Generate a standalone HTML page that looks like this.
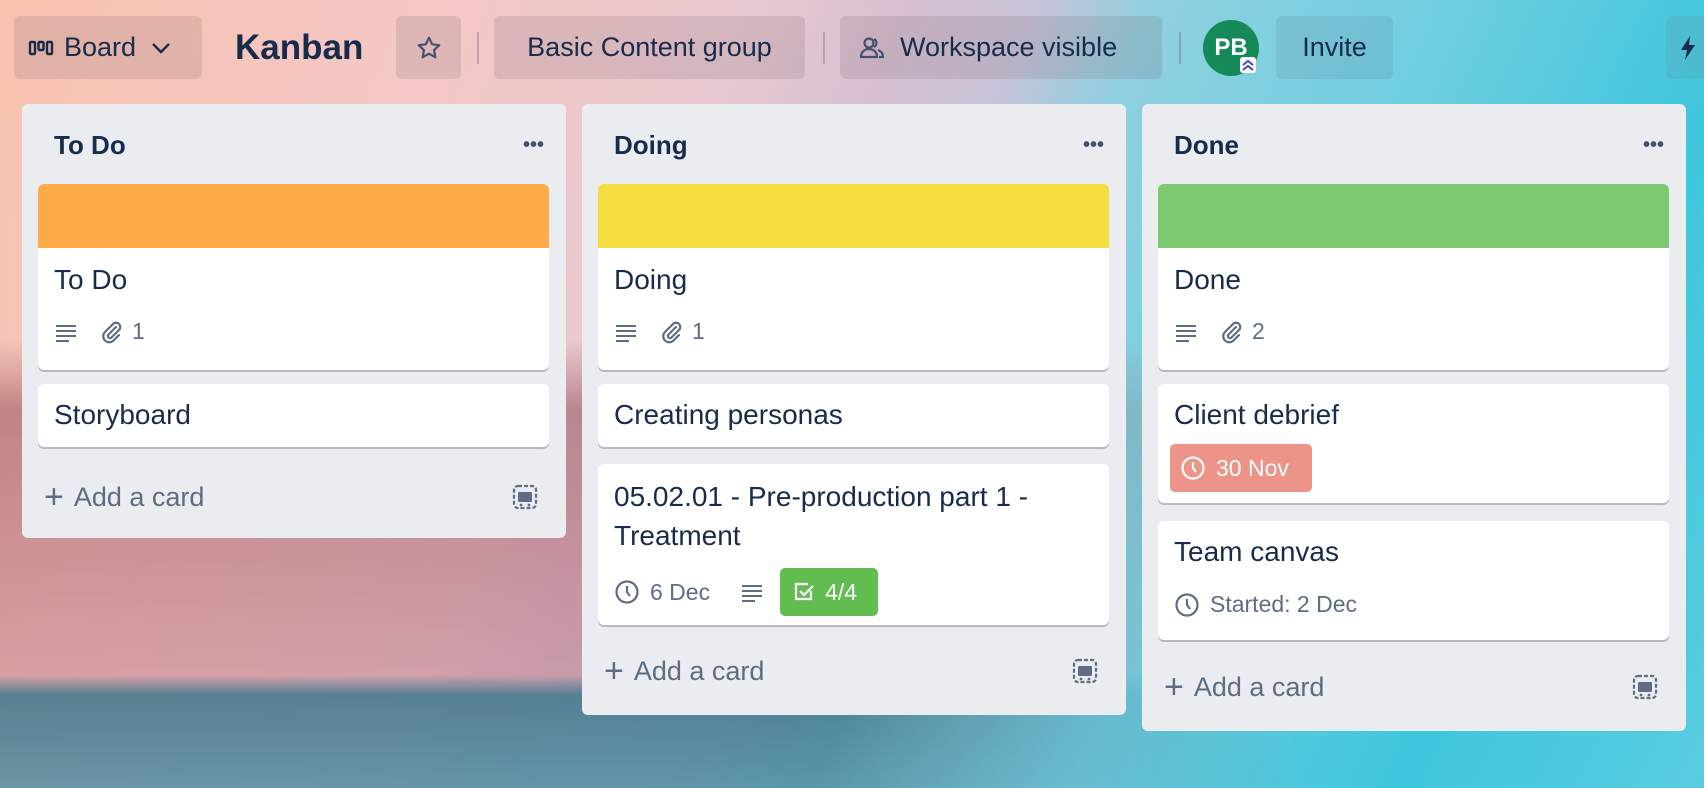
<!DOCTYPE html>
<html><head><meta charset="utf-8"><style>
*{box-sizing:border-box;margin:0;padding:0}
body{width:1704px;height:788px;overflow:hidden;position:relative;font-family:"Liberation Sans",sans-serif;color:#172b4d;
background:linear-gradient(115deg,#f9c2ae 0%,#f4c8c6 22%,#e9c9cf 36%,#d6c0d0 44%,#c9c3d8 50%,#8fd0e0 56%,#6fcfe0 70%,#3ec6dc 85%,#5acde0 100%);}
.bg{position:absolute;left:0;top:0;width:1704px;height:788px;
background:linear-gradient(180deg,rgba(0,0,0,0) 0,rgba(0,0,0,0) 340px,rgba(150,80,90,.55) 410px,rgba(180,110,125,.45) 675px,rgba(70,120,140,.9) 695px,rgba(80,140,160,.85) 788px);
-webkit-mask-image:linear-gradient(100deg,#000 0%,#000 52%,rgba(0,0,0,.3) 66%,transparent 78%);mask-image:linear-gradient(100deg,#000 0%,#000 52%,rgba(0,0,0,.3) 66%,transparent 78%)}
.a{position:absolute}
.btn{position:absolute;top:16px;height:63px;border-radius:6px;background:rgba(120,100,110,.18);display:flex;align-items:center;font-size:27px;color:#172b4d}
.sep{position:absolute;top:32px;width:2px;height:32px;background:rgba(80,80,100,.3)}
.list{position:absolute;top:104px;width:544px;background:#ebecf0;border-radius:6px}
.lt{position:absolute;left:32px;top:26px;font-size:26px;font-weight:bold}
.dots{position:absolute;right:22px;top:30px;font-size:20px;color:#42526e;font-weight:bold}
.card{position:absolute;left:16px;width:511px;background:#fff;border-radius:6px;box-shadow:0 2px 0 #b4b9c4}
.ct{position:absolute;left:16px;font-size:28px;color:#172b4d}
.meta{position:absolute;left:16px;display:flex;align-items:center;font-size:23px;color:#5e6c84}
.add{position:absolute;left:22px;font-size:27px;color:#5e6c84;display:flex;align-items:center}
</style></head><body>
<div class="bg"></div>
<div class="btn" style="left:14px;width:188px;padding-left:14px">
<svg width="26" height="18" viewBox="0 0 26 18"><g fill="none" stroke="#172b4d" stroke-width="2.4"><rect x="2" y="3" width="5" height="12" rx="1"/><rect x="10.5" y="3" width="5" height="8" rx="1"/><rect x="19" y="3" width="5" height="12" rx="1"/></g></svg>
<span style="margin-left:10px">Board</span>
<svg style="margin-left:14px" width="22" height="14" viewBox="0 0 22 14"><path d="M3 3l8 8 8-8" fill="none" stroke="#172b4d" stroke-width="2.4"/></svg></div>
<div class="a" style="left:235px;top:28px;font-size:35px;font-weight:bold">Kanban</div>
<div class="btn" style="left:396px;width:65px;justify-content:center"><svg width="26" height="26" viewBox="0 0 24 24"><path d="M12 2.5l2.9 6.1 6.6.8-4.9 4.6 1.3 6.6L12 17.3l-5.9 3.3 1.3-6.6-4.9-4.6 6.6-.8z" fill="none" stroke="#42526e" stroke-width="2" stroke-linejoin="round"/></svg></div>
<div class="sep" style="left:477px"></div>
<div class="btn" style="left:494px;width:311px;justify-content:center">Basic Content group</div>
<div class="sep" style="left:823px"></div>
<div class="btn" style="left:840px;width:322px;padding-left:18px">
<svg width="28" height="26" viewBox="0 0 28 26"><g fill="none" stroke="#42526e" stroke-width="2.2"><circle cx="11" cy="8" r="4.5"/><path d="M3 22c0-5 3.5-8 8-8s8 3 8 8z"/><path d="M16 4a4.5 4.5 0 010 8M20 15c3 1 5 3.5 5 7h-4"/></g></svg>
<span style="margin-left:14px">Workspace visible</span></div>
<div class="sep" style="left:1179px"></div>
<div class="a" style="left:1203px;top:20px;width:56px;height:56px;border-radius:50%;background:#158a58;color:#fff;font-weight:bold;font-size:24px;display:flex;align-items:center;justify-content:center">PB</div>
<div class="a" style="left:1240px;top:57px;width:16px;height:16px;background:#fff;border-radius:3px"><svg width="16" height="16" viewBox="0 0 16 16"><path d="M3 8l5-4 5 4M3 13l5-4 5 4" fill="none" stroke="#3d45c0" stroke-width="2"/></svg></div>
<div class="btn" style="left:1276px;width:117px;justify-content:center;background:rgba(100,150,170,.25)">Invite</div>
<div class="btn" style="left:1666px;width:60px;padding-left:12px;background:rgba(100,150,170,.25)"><svg width="20" height="28" viewBox="0 0 20 28"><path d="M12 2L3 16h6l-2 10 10-15h-6z" fill="#172b4d"/></svg></div>

<!-- List 1 -->
<div class="list" style="left:22px;height:434px">
<div class="lt">To Do</div><div class="dots">•••</div>
<div class="card" style="top:80px;height:186px;overflow:visible">
<div style="height:64px;background:#ffab4a;border-radius:6px 6px 0 0"></div>
<div class="ct" style="top:80px">To Do</div>
<div class="meta" style="top:134px"><svg width="24" height="20" viewBox="0 0 24 20"><path d="M2 4h20M2 9h20M2 14h20M2 19h13" stroke="#5e6c84" stroke-width="2"/></svg>
<svg style="margin-left:22px" width="24" height="24" viewBox="0 0 24 24"><path d="M16 7l-7.5 7.5a2 2 0 003 3L19 10a4 4 0 00-6-6l-8 8a6 6 0 008.5 8.5L19 15" fill="none" stroke="#5e6c84" stroke-width="2.2" stroke-linecap="round"/></svg><span style="margin-left:8px">1</span></div>
</div>
<div class="card" style="top:280px;height:63px"><div class="ct" style="top:15px">Storyboard</div></div>
<div class="add" style="top:374px"><span style="font-size:34px;margin-right:10px;font-weight:300">+</span>Add a card</div>
<svg class="a" style="right:28px;top:380px" width="26" height="26" viewBox="0 0 26 26"><rect x="2" y="2" width="22" height="22" rx="4" fill="none" stroke="#5e6c84" stroke-width="2.2" stroke-dasharray="4 2"/><rect x="6" y="8" width="14" height="10" rx="1" fill="#5e6c84"/><circle cx="9" cy="21" r="1.4" fill="#5e6c84"/><circle cx="17" cy="21" r="1.4" fill="#5e6c84"/></svg>
</div>

<!-- List 2 -->
<div class="list" style="left:582px;height:611px">
<div class="lt">Doing</div><div class="dots">•••</div>
<div class="card" style="top:80px;height:186px">
<div style="height:64px;background:#f5dc3f;border-radius:6px 6px 0 0"></div>
<div class="ct" style="top:80px">Doing</div>
<div class="meta" style="top:134px"><svg width="24" height="20" viewBox="0 0 24 20"><path d="M2 4h20M2 9h20M2 14h20M2 19h13" stroke="#5e6c84" stroke-width="2"/></svg>
<svg style="margin-left:22px" width="24" height="24" viewBox="0 0 24 24"><path d="M16 7l-7.5 7.5a2 2 0 003 3L19 10a4 4 0 00-6-6l-8 8a6 6 0 008.5 8.5L19 15" fill="none" stroke="#5e6c84" stroke-width="2.2" stroke-linecap="round"/></svg><span style="margin-left:8px">1</span></div>
</div>
<div class="card" style="top:280px;height:63px"><div class="ct" style="top:15px">Creating personas</div></div>
<div class="card" style="top:360px;height:161px">
<div class="ct" style="top:13px;line-height:39px;width:480px">05.02.01 - Pre-production part 1 - Treatment</div>
<div class="meta" style="top:104px"><svg width="26" height="26" viewBox="0 0 26 26"><circle cx="13" cy="13" r="10.5" fill="none" stroke="#5e6c84" stroke-width="2.2"/><path d="M13 7v6l3 4" fill="none" stroke="#5e6c84" stroke-width="2.2"/></svg><span style="margin-left:10px">6 Dec</span>
<svg style="margin-left:30px" width="24" height="20" viewBox="0 0 24 20"><path d="M2 4h20M2 9h20M2 14h20M2 19h13" stroke="#5e6c84" stroke-width="2"/></svg>
<div style="margin-left:16px;background:#61bd4f;color:#fff;border-radius:5px;height:48px;width:98px;display:flex;align-items:center;padding-left:13px"><svg width="22" height="22" viewBox="0 0 22 22"><path d="M18 10v8H3V3h12" fill="none" stroke="#fff" stroke-width="2.2"/><path d="M7 10l4 4 9-9" fill="none" stroke="#fff" stroke-width="2.2"/></svg><span style="margin-left:10px">4/4</span></div></div>
</div>
<div class="add" style="top:548px"><span style="font-size:34px;margin-right:10px;font-weight:300">+</span>Add a card</div>
<svg class="a" style="right:28px;top:554px" width="26" height="26" viewBox="0 0 26 26"><rect x="2" y="2" width="22" height="22" rx="4" fill="none" stroke="#5e6c84" stroke-width="2.2" stroke-dasharray="4 2"/><rect x="6" y="8" width="14" height="10" rx="1" fill="#5e6c84"/><circle cx="9" cy="21" r="1.4" fill="#5e6c84"/><circle cx="17" cy="21" r="1.4" fill="#5e6c84"/></svg>
</div>

<!-- List 3 -->
<div class="list" style="left:1142px;height:627px">
<div class="lt">Done</div><div class="dots">•••</div>
<div class="card" style="top:80px;height:186px">
<div style="height:64px;background:#7ec86f;border-radius:6px 6px 0 0"></div>
<div class="ct" style="top:80px">Done</div>
<div class="meta" style="top:134px"><svg width="24" height="20" viewBox="0 0 24 20"><path d="M2 4h20M2 9h20M2 14h20M2 19h13" stroke="#5e6c84" stroke-width="2"/></svg>
<svg style="margin-left:22px" width="24" height="24" viewBox="0 0 24 24"><path d="M16 7l-7.5 7.5a2 2 0 003 3L19 10a4 4 0 00-6-6l-8 8a6 6 0 008.5 8.5L19 15" fill="none" stroke="#5e6c84" stroke-width="2.2" stroke-linecap="round"/></svg><span style="margin-left:8px">2</span></div>
</div>
<div class="card" style="top:280px;height:119px"><div class="ct" style="top:15px">Client debrief</div>
<div class="a" style="left:12px;top:60px;width:142px;height:48px;background:#ec9488;border-radius:5px;color:#fff;display:flex;align-items:center;padding-left:10px;font-size:23px"><svg width="26" height="26" viewBox="0 0 26 26"><circle cx="13" cy="13" r="10.5" fill="none" stroke="#fff" stroke-width="2.2"/><path d="M13 7v6l3 4" fill="none" stroke="#fff" stroke-width="2.2"/></svg><span style="margin-left:10px">30 Nov</span></div></div>
<div class="card" style="top:417px;height:119px"><div class="ct" style="top:15px">Team canvas</div>
<div class="meta" style="top:70px"><svg width="26" height="26" viewBox="0 0 26 26"><circle cx="13" cy="13" r="10.5" fill="none" stroke="#5e6c84" stroke-width="2.2"/><path d="M13 7v6l3 4" fill="none" stroke="#5e6c84" stroke-width="2.2"/></svg><span style="margin-left:10px">Started: 2 Dec</span></div></div>
<div class="add" style="top:564px"><span style="font-size:34px;margin-right:10px;font-weight:300">+</span>Add a card</div>
<svg class="a" style="right:28px;top:570px" width="26" height="26" viewBox="0 0 26 26"><rect x="2" y="2" width="22" height="22" rx="4" fill="none" stroke="#5e6c84" stroke-width="2.2" stroke-dasharray="4 2"/><rect x="6" y="8" width="14" height="10" rx="1" fill="#5e6c84"/><circle cx="9" cy="21" r="1.4" fill="#5e6c84"/><circle cx="17" cy="21" r="1.4" fill="#5e6c84"/></svg>
</div>
</body></html>
